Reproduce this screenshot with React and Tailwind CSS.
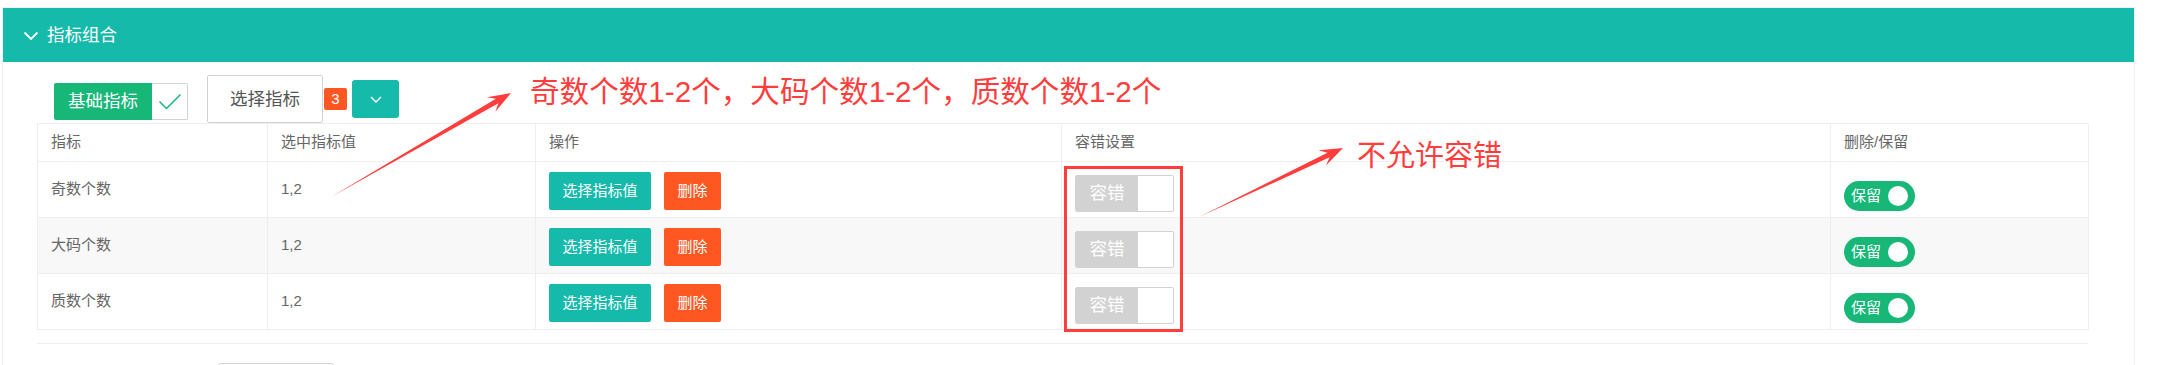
import React from 'react'

const rows = [
	{ name: '奇数个数', value: '1,2' },
	{ name: '大码个数', value: '1,2' },
	{ name: '质数个数', value: '1,2' },
]

const cols = 'grid grid-cols-[230px_268px_526px_769px_258px]'
const cell = 'flex items-center pl-[13px] border-r border-b border-[#eee]'

// annotation arrow: thin wedge from tail to a notched head
const Arrow = ({ from, to }) => {
	const [x1, y1] = from
	const [x2, y2] = to
	const len = Math.hypot(x2 - x1, y2 - y1)
	const ux = (x2 - x1) / len, uy = (y2 - y1) / len
	const nx = -uy, ny = ux
	const at = (d, w) => [x2 - ux * d + nx * w, y2 - uy * d + ny * w]
	const pts = [[x1, y1], at(16, 2.5), at(23, 8.5), [x2, y2], at(23, -8.5), at(16, -2.5)]
	return <polygon points={pts.map(p => p.join(',')).join(' ')} fill="#ff3d3d" />
}

const FaultSwitch = () => (
	<div className="mt-[7px] flex h-[37px] w-[99px] overflow-hidden rounded-[2px] border border-[#d2d2d2] bg-white">
		<div className="flex w-[62px] items-center justify-center bg-[#d2d2d2] text-[17.5px] text-white">容错</div>
	</div>
)

const KeepSwitch = () => (
	<div className="mt-[12px] flex h-[30px] w-[71px] items-center justify-between rounded-full bg-[#16b777] pl-[7px] pr-[7px]">
		<span className="text-[15px] leading-none text-white">保留</span>
		<span className="h-[20px] w-[20px] rounded-full bg-white"></span>
	</div>
)

const App = () => {
	return (
		<div className="relative h-[365px] w-[2164px] overflow-hidden bg-white font-['Liberation_Sans','Noto_Sans_CJK_SC',sans-serif]">

			<div className="ml-[2px] mt-[7px] h-[358px] w-[2133px] border-x border-t border-[#eee]">

				<div className="flex h-[54px] items-center bg-[#16baaa] pl-[20px]">
					<svg width="16" height="10" viewBox="0 0 16 10" className="mt-[1px]">
						<path d="M1.5 1.5 L8 8 L14.5 1.5" fill="none" stroke="white" strokeWidth="1.8" />
					</svg>
					<span className="ml-[8px] text-[17.5px] text-white">指标组合</span>
				</div>

				<div className="pl-[34px] pt-[13px]">

					<div className="ml-[17px] flex h-[48px] items-start">
						<div className="mt-[8px] flex h-[37px]">
							<div className="flex items-center rounded-l-[2px] bg-[#16b777] px-[14px] text-[17.5px] text-white">基础指标</div>
							<div className="flex w-[36px] items-center justify-center rounded-r-[2px] border border-l-0 border-[#d2d2d2] bg-white">
								<svg width="24" height="17" viewBox="0 0 24 17">
									<path d="M1.5 8.5 L8.5 15.5 L22.5 1.5" fill="none" stroke="#16b777" strokeWidth="1.5" />
								</svg>
							</div>
						</div>
						<div className="ml-[19px] flex h-[48px] w-[116px] items-center justify-center rounded-[2px] border border-[#d2d2d2] bg-white text-[17.5px] text-[#555]">选择指标</div>
						<div className="ml-[1px] mt-[13px] flex h-[22px] w-[23px] items-center justify-center rounded-[2px] bg-[#ff5722] text-[15px] text-white">3</div>
						<div className="ml-[5px] mt-[5px] flex h-[38px] w-[47px] items-center justify-center rounded-[3px] bg-[#16baaa]">
							<svg width="12" height="7" viewBox="0 0 12 7">
								<path d="M1 1 L6 6 L11 1" fill="none" stroke="white" strokeWidth="1.4" />
							</svg>
						</div>
					</div>

					<div className={`${cols} w-[2051px] border-l border-t border-[#eee] text-[15px] text-[#666]`}>
						{['指标', '选中指标值', '操作', '容错设置', '删除/保留'].map((h) => (
							<div key={h} className={`${cell} h-[38px]`}>{h}</div>
						))}
						{rows.map((r, i) => (
							<React.Fragment key={r.name}>
								<div className={`${cell} h-[56px] ${i === 1 ? 'bg-[#f8f8f8]' : ''}`}>{r.name}</div>
								<div className={`${cell} h-[56px] ${i === 1 ? 'bg-[#f8f8f8]' : ''}`}>{r.value}</div>
								<div className={`${cell} h-[56px] gap-[13px] ${i === 1 ? 'bg-[#f8f8f8]' : ''}`}>
									<button className="mt-[3px] flex h-[38px] w-[102px] items-center justify-center rounded-[2px] bg-[#16baaa] text-[15px] text-white">选择指标值</button>
									<button className="mt-[3px] flex h-[38px] w-[57px] items-center justify-center rounded-[2px] bg-[#ff5722] text-[15px] text-white">删除</button>
								</div>
								<div className={`${cell} h-[56px] ${i === 1 ? 'bg-[#f8f8f8]' : ''}`}><FaultSwitch /></div>
								<div className={`${cell} h-[56px] ${i === 1 ? 'bg-[#f8f8f8]' : ''}`}><KeepSwitch /></div>
							</React.Fragment>
						))}
					</div>

					<div className="mt-[13px] w-[2051px] border-t border-[#eee] pt-[19px]">
						<div className="ml-[181px] h-[40px] w-[116px] rounded-[3px] border border-[#d2d2d2] bg-white"></div>
					</div>
				</div>
			</div>

			{/* annotations drawn over the screenshot */}
			<div className="pointer-events-none absolute left-[530px] top-[77px] whitespace-nowrap text-[29.6px] leading-[29px] text-[#ff3d3d]">奇数个数1-2个，大码个数1-2个，质数个数1-2个</div>
			<div className="pointer-events-none absolute left-[1357px] top-[142px] whitespace-nowrap text-[29px] leading-[29px] text-[#ff3d3d]">不允许容错</div>
			<div className="pointer-events-none absolute left-[1064px] top-[166px] h-[166px] w-[119px] border-[3px] border-[#ff3d3d]"></div>
			<svg className="pointer-events-none absolute left-0 top-0" width="2164" height="365">
				<Arrow from={[331, 197]} to={[511, 93]} />
				<Arrow from={[1199, 217]} to={[1343, 148]} />
			</svg>
		</div>
	)
}

export default App
